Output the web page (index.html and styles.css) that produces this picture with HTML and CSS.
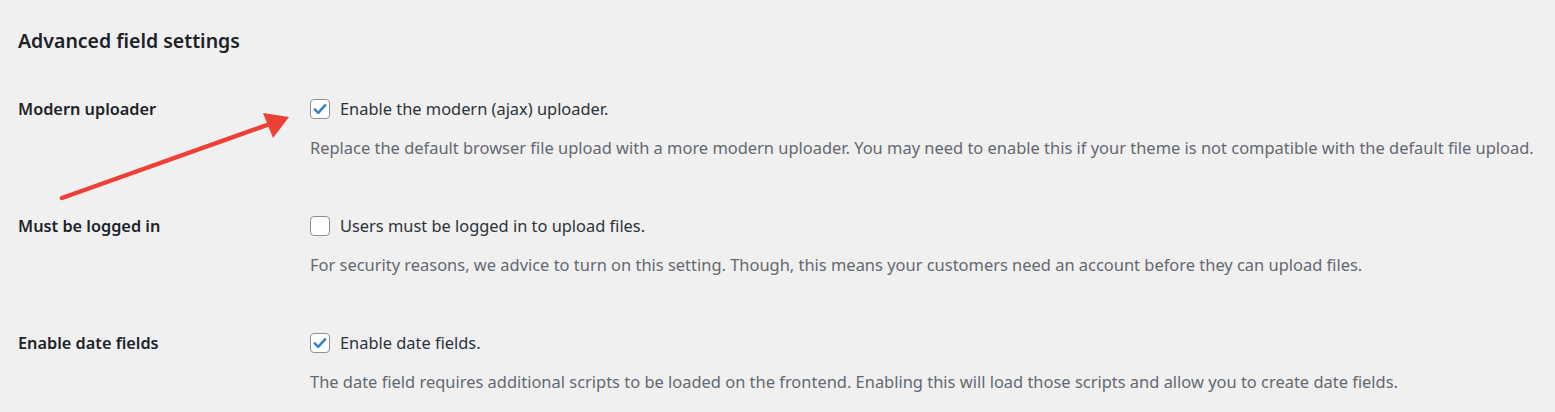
FILE: index.html
```html
<!DOCTYPE html>
<html>
<head>
<meta charset="utf-8">
<link rel="stylesheet" href="styles.css">
</head>
<body>
<div class="page">
  <h2 class="title">Advanced field settings</h2>
  <div class="settings">
    <div class="row">
      <div class="label">Modern uploader</div>
      <div class="field">
        <label class="check"><span class="box checked"><svg viewBox="0 0 20 20" width="20" height="20"><path d="M4.2 10.4 L8 14.2 L15.8 5.8" fill="none" stroke="#3582c4" stroke-width="2.8" stroke-linecap="round" stroke-linejoin="round"/></svg></span>Enable the modern (ajax) uploader.</label>
        <p class="desc">Replace the default browser file upload with a more modern uploader. You may need to enable this if your theme is not compatible with the default file upload.</p>
      </div>
    </div>
    <div class="row">
      <div class="label">Must be logged in</div>
      <div class="field">
        <label class="check"><span class="box"></span>Users must be logged in to upload files.</label>
        <p class="desc">For security reasons, we advice to turn on this setting. Though, this means your customers need an account before they can upload files.</p>
      </div>
    </div>
    <div class="row">
      <div class="label">Enable date fields</div>
      <div class="field">
        <label class="check"><span class="box checked"><svg viewBox="0 0 20 20" width="20" height="20"><path d="M4.2 10.4 L8 14.2 L15.8 5.8" fill="none" stroke="#3582c4" stroke-width="2.8" stroke-linecap="round" stroke-linejoin="round"/></svg></span>Enable date fields.</label>
        <p class="desc">The date field requires additional scripts to be loaded on the frontend. Enabling this will load those scripts and allow you to create date fields.</p>
      </div>
    </div>
  </div>
  <svg class="arrow" width="300" height="220" viewBox="0 0 300 220">
    <line x1="62" y1="198" x2="270" y2="124" stroke="#ee4037" stroke-width="4.5" stroke-linecap="round"/>
    <polygon points="263,113 289,117 273,138" fill="#ee4037"/>
  </svg>
</div>
</body>
</html>
```
FILE: styles.css
```css
html, body {
  margin: 0;
  padding: 0;
  background: #f0f0f1;
}
body {
  font-family: "Noto Sans", "Open Sans", sans-serif;
  color: #1d2327;
}
.page {
  position: relative;
  padding: 26px 0 0 18px;
  height: 386px;
  overflow: hidden;
}
.title {
  margin: 0;
  font-size: 19.5px;
  line-height: 30px;
  font-weight: 600;
  color: #1d2327;
}
.settings {
  display: flex;
  flex-direction: column;
  gap: 54px;
  margin-top: 41px;
}
.row {
  display: grid;
  grid-template-columns: 292px 1fr;
}
.label {
  font-size: 16.3px;
  line-height: 24px;
  font-weight: 600;
  color: #1d2327;
}
.field {
  display: flex;
  flex-direction: column;
  gap: 15px;
}
.check {
  display: flex;
  align-items: center;
  gap: 10px;
  font-size: 16.4px;
  line-height: 24px;
  color: #2c3338;
}
.box {
  box-sizing: border-box;
  width: 20px;
  height: 20px;
  border: 1px solid #8c8f94;
  border-radius: 4px;
  background: #fff;
  display: flex;
  align-items: center;
  justify-content: center;
  flex: none;
}
.box svg {
  display: block;
}
.desc {
  margin: 0;
  font-size: 16.45px;
  line-height: 24px;
  color: #646970;
}
.arrow {
  position: absolute;
  left: 0;
  top: 0;
}
```
